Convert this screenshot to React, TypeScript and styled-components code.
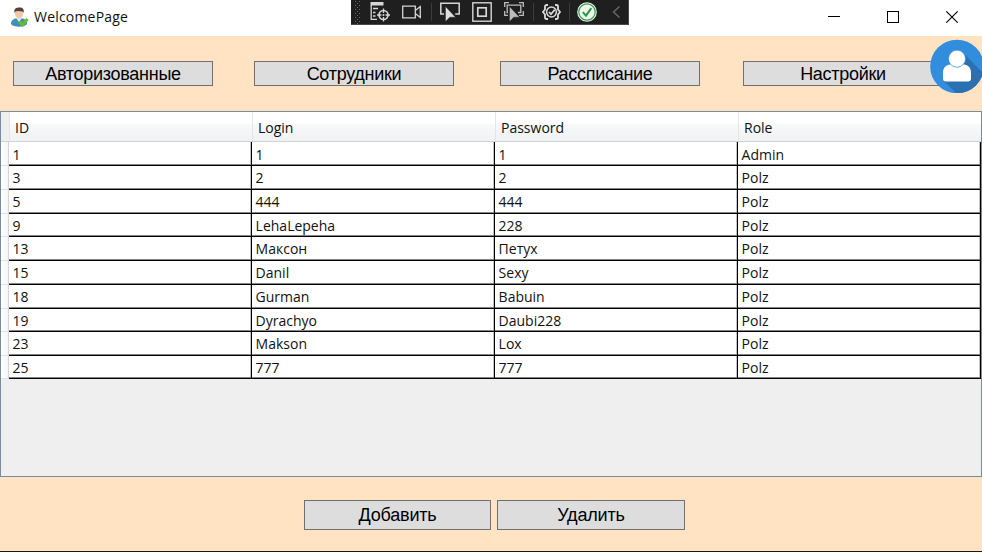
import React from 'react';
import styled, { createGlobalStyle } from 'styled-components';

const GlobalStyle = createGlobalStyle`
  * { box-sizing: border-box; }
  body { margin: 0; overflow: hidden; background: #fff; }
`;

const Window = styled.div`
  position: relative;
  display: flex;
  flex-direction: column;
  width: 982px;
  height: 552px;
  overflow: hidden;
  background: #ffe3c3;
  border-bottom: 1px solid #1c1815;
  color: #111;
  font-family: 'Open Sans', 'Noto Sans', sans-serif;
`;

const TitleBar = styled.header`
  display: flex;
  align-items: center;
  flex: 0 0 36px;
  padding: 0 1px 2px 10px;
  background: #fff;
`;

const Title = styled.h1`
  flex: 1;
  margin: 0 0 0 5px;
  font-size: 14px;
  font-weight: 400;
  line-height: 20px;
  letter-spacing: 0.2px;
`;

const Caption = styled.button`
  display: grid;
  place-items: center;
  width: 58.7px;
  height: 34px;
  padding: 0;
  border: 0;
  background: none;
  svg { display: block; }
`;

const DebugBar = styled.div`
  position: absolute;
  top: 0;
  left: 351px;
  display: flex;
  align-items: center;
  width: 278px;
  height: 25px;
  padding-left: 3px;
  background: #1f1f20;
  border: solid #48484a;
  border-width: 0 1px 1px 0;
`;

const Slot = styled.span<{ $w?: number; $gap: number }>`
  display: block;
  flex: none;
  width: ${(p) => p.$w ?? 20}px;
  height: 24px;
  margin-left: ${(p) => p.$gap}px;
  svg { display: block; }
`;

const Divider = styled.span<{ $gap: number }>`
  flex: none;
  width: 1px;
  height: 18px;
  margin-left: ${(p) => p.$gap}px;
  background: #3b3b3d;
`;

const Nav = styled.nav`
  position: relative;
  display: grid;
  grid-template-columns: 200px 200px 200px 200px;
  column-gap: 41px;
  flex: 0 0 75px;
  padding: 25px 0 0 13px;
`;

const PushButton = styled.button<{ $shift?: number; $w?: number; $tall?: boolean }>`
  width: ${(p) => p.$w ?? 200}px;
  height: ${(p) => (p.$tall ? 30 : 25)}px;
  margin-left: ${(p) => p.$shift ?? 0}px;
  padding: 0;
  border: 1px solid #707070;
  background: #ddd;
  color: #000;
  font: 18px/${(p) => (p.$tall ? 28 : 24)}px 'Liberation Sans', Arial, sans-serif;
  letter-spacing: ${(p) => (p.$tall ? -0.18 : -0.28)}px;
  white-space: nowrap;
`;

const Avatar = styled.div`
  position: absolute;
  top: 3px;
  left: 930px;
  width: 54px;
  height: 54px;
  svg { display: block; }
`;

const GridPanel = styled.main`
  flex: 0 0 366px;
  border: 1px solid #768ba0;
  background: #efefef;
`;

const HeaderRow = styled.div`
  display: grid;
  grid-template-columns: 8px 243px 243px 243px 243px;
  height: 30px;
  background: linear-gradient(#fff 0, #fff 38%, #f8f9fa 42%, #eff1f3 100%);
  border-bottom: 1px solid #cfd2d5;
`;

const Corner = styled.span`
  background: #efefef;
`;

const HeaderCell = styled.span`
  padding: 6px 0 0 5px;
  border-left: 1px solid #e3e5e7;
  font-size: 14px;
  line-height: 20px;
`;

const Row = styled.div<{ $h: number }>`
  display: grid;
  grid-template-columns: 8px 243px 243px 243px 243px;
  height: ${(p) => p.$h}px;
`;

const RowHeader = styled.span`
  background: linear-gradient(90deg, #fff, #f4f5f6);
  border-right: 1px solid #d5d5d5;
  border-bottom: 1px solid #e3e3e5;
`;

const Cell = styled.span`
  padding: 2px 0 0 3.6px;
  overflow: hidden;
  background: #fff;
  border-right: 1px solid #000;
  border-bottom: 1px solid #000;
  box-shadow: inset 0 -1px #858585, inset -1px 0 #c4c4c4;
  font-size: 14px;
  line-height: 20px;
  white-space: nowrap;
  ${Row}:nth-child(2) & { padding-top: 3px; }
`;

const Actions = styled.footer`
  display: flex;
  gap: 6px;
  padding: 23px 0 0 304px;
`;

const rows: [string, string, string, string, number][] = [
  ['1', '1', '1', 'Admin', 24],
  ['3', '2', '2', 'Polz', 24],
  ['5', '444', '444', 'Polz', 24],
  ['9', 'LehaLepeha', '228', 'Polz', 23],
  ['13', 'Максон', 'Петух', 'Polz', 24],
  ['15', 'Danil', 'Sexy', 'Polz', 24],
  ['18', 'Gurman', 'Babuin', 'Polz', 24],
  ['19', 'Dyrachyo', 'Daubi228', 'Polz', 23],
  ['23', 'Makson', 'Lox', 'Polz', 24],
  ['25', '777', '777', 'Polz', 23],
];

const AppIcon = () => (
  <svg width="19" height="21" viewBox="0 0 19 21">
    <path d="M1 17c0-4 2.500-5 6-6h4c4 1 6 2 6 6-2 3.500-14 3.500-16 0z" fill="#3f8fb8" />
    <path d="m6 11 3 4 3-4z" fill="#d8edf5" />
    <ellipse cx="9" cy="6.500" rx="4" ry="5" fill="#f0c8a8" />
    <path d="M4.500 6C3.500 1 7 .5 9.500.6c3.500 0 5 2 4 5.400L12.500 4.500 8 4 5.500 4.500z" fill="#5b3f36" />
    <path d="m9.500 14.500 3 3.500 5-6" fill="none" stroke="#66bd32" strokeWidth="3" />
  </svg>
);

const Cursor = ({ fill = '#dedede' }: { fill?: string }) => (
  <path d="M5.500 6.500v15l4.300-4.300h5.700z" fill={fill} stroke="#1f1f20" strokeWidth=".4" />
);

const DebugTools = () => (
  <DebugBar>
    <Slot $w={8} $gap={0}>
      <svg width="8" height="24" fill="#6c6c6e">
        {[1, 5, 9, 13, 17, 21].map((y) => (
          <g key={y}>
            <rect x="1" y={y} width="1" height="1" />
            <rect x="5" y={y} width="1" height="1" />
            <rect x="3" y={y + 2} width="1" height="1" />
          </g>
        ))}
      </svg>
    </Slot>
    <Slot $gap={8}>
      <svg width="20" height="24" fill="none" stroke="#d6d6d6" strokeWidth="1.300">
        <path d="M.5 2h13v3.500H.5z" fill="#d6d6d6" stroke="none" />
        <path d="M1.200 5v14.400H7M3 8.500h5M3 12.500h2.500M3 16h2.500" />
        <circle cx="13.500" cy="15" r="4.500" strokeWidth="1.700" />
        <path d="M13.500 8.500v4.500M13.500 17v4.500M7 15h4.500M15.500 15H20" />
        <circle cx="13.500" cy="15" r="1" fill="#d6d6d6" stroke="none" />
      </svg>
    </Slot>
    <Slot $gap={12}>
      <svg width="20" height="24" fill="none" stroke="#d6d6d6" strokeWidth="1.300">
        <path d="M.7 6.200h12.600v11.600H.7zM13.300 10.500l5-4v11l-5-4" />
      </svg>
    </Slot>
    <Divider $gap={9} />
    <Slot $gap={8}>
      <svg width="20" height="24">
        <path d="M4 14H.8V3.200h18.400V14h-4" fill="none" stroke="#d6d6d6" strokeWidth="1.500" />
        <Cursor />
      </svg>
    </Slot>
    <Slot $gap={12}>
      <svg width="20" height="24" fill="none" stroke="#d6d6d6">
        <rect x=".8" y="2.800" width="18.400" height="18.400" strokeWidth="1.400" />
        <rect x="5.800" y="7.800" width="8.400" height="8.400" strokeWidth="1.700" />
      </svg>
    </Slot>
    <Slot $gap={12}>
      <svg width="20" height="24">
        <path d="M.7 7V2.700H5M15 2.700h4.300V7M.7 11v4.300H4M15 15.300h4.300V11" fill="none" stroke="#bcbcbc" strokeWidth="1.300" />
        <path d="M4 12.500H3.200V5.200h13.600v7.300H14" fill="none" stroke="#bcbcbc" strokeWidth="1.300" />
        <Cursor fill="#bcbcbc" />
      </svg>
    </Slot>
    <Divider $gap={9} />
    <Slot $gap={8}>
      <svg width="20" height="24" fill="none" stroke="#dadada" strokeWidth="1.800">
        <path d="M6 5H4.700Q3 5 3 6.500v3L1 12l2 2.500v3Q3 19 4.700 19H6M13 5h1.300Q16 5 16 6.500v3l2 2.500-2 2.500v3q0 1.500-1.700 1.500H13" />
        <circle cx="9.500" cy="12" r="4.900" strokeWidth="1.500" />
        <path d="m7 12 2 2.200 3.700-4.500" />
      </svg>
    </Slot>
    <Divider $gap={7} />
    <Slot $gap={7}>
      <svg width="20" height="24">
        <circle cx="10" cy="12" r="9.800" fill="#edf6ed" />
        <circle cx="10" cy="12" r="8.200" fill="none" stroke="#3b9b48" strokeWidth="1.200" />
        <path d="m5.800 12.200 3.200 3.500 5.300-7.500" fill="none" stroke="#2f9440" strokeWidth="2" />
      </svg>
    </Slot>
    <Slot $w={12} $gap={14}>
      <svg width="12" height="24">
        <path d="m8.500 6.500-6 5.500 6 5.500" fill="none" stroke="#69696b" strokeWidth="1.400" />
      </svg>
    </Slot>
  </DebugBar>
);

const UserBadge = () => (
  <Avatar>
    <svg width="54" height="54" viewBox="0 0 54 54">
      <defs>
        <clipPath id="disc"><circle cx="27" cy="27.500" r="26.800" /></clipPath>
      </defs>
      <g clipPath="url(#disc)">
        <rect width="54" height="54" fill="#338ddd" />
        <path d="m33 14 21 21v19H26L13.500 41.500z" fill="#2b71b1" />
      </g>
      <path d="M13 39.500V34q0-7.500 6.500-8.500h1.200q6.300 5.500 12.600 0h1.200q6.500 1 6.500 8.500v5.500q0 3-3 3H16q-3 0-3-3z" fill="#fff" />
      <circle cx="27" cy="19.700" r="8.500" fill="#fff" stroke="#338ddd" strokeWidth=".6" />
    </svg>
  </Avatar>
);

export default function App() {
  return (
    <>
      <GlobalStyle />
      <Window>
        <TitleBar>
          <AppIcon />
          <Title>WelcomePage</Title>
          <Caption aria-label="Minimize">
            <svg width="12" height="12"><path d="M0 5.500h12" stroke="#000" /></svg>
          </Caption>
          <Caption aria-label="Maximize">
            <svg width="12" height="12"><rect x=".5" y=".5" width="11" height="11" fill="none" stroke="#000" /></svg>
          </Caption>
          <Caption aria-label="Close">
            <svg width="12" height="12"><path d="m.3.3 11.400 11.400M11.700.3.300 11.700" stroke="#000" strokeWidth="1.100" /></svg>
          </Caption>
          <DebugTools />
        </TitleBar>
        <Nav>
          <PushButton>Авторизованные</PushButton>
          <PushButton>Сотрудники</PushButton>
          <PushButton $shift={5}>Рассписание</PushButton>
          <PushButton $shift={7}>Настройки</PushButton>
          <UserBadge />
        </Nav>
        <GridPanel>
          <HeaderRow>
            <Corner />
            {['ID', 'Login', 'Password', 'Role'].map((name) => (
              <HeaderCell key={name}>{name}</HeaderCell>
            ))}
          </HeaderRow>
          {rows.map(([id, login, password, role, height]) => (
            <Row key={id} $h={height}>
              <RowHeader />
              <Cell>{id}</Cell>
              <Cell>{login}</Cell>
              <Cell>{password}</Cell>
              <Cell>{role}</Cell>
            </Row>
          ))}
        </GridPanel>
        <Actions>
          <PushButton $tall $w={187}>Добавить</PushButton>
          <PushButton $tall $w={188}>Удалить</PushButton>
        </Actions>
      </Window>
    </>
  );
}
